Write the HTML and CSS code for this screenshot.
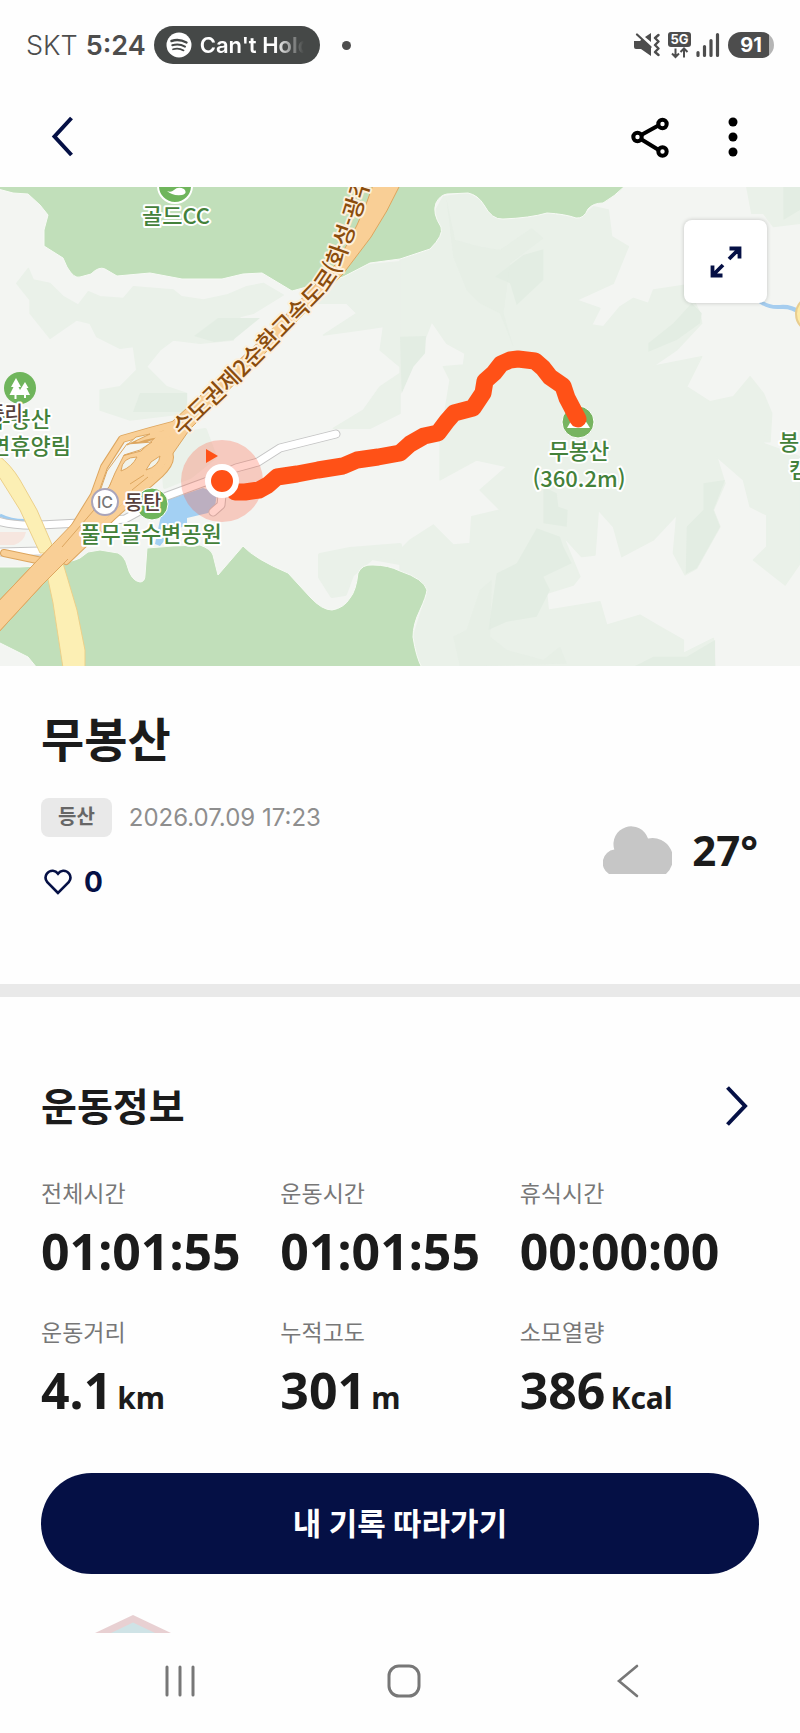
FILE: index.html
```html
<!DOCTYPE html>
<html lang="ko">
<head>
    <meta charset="UTF-8">
    <meta name="viewport" content="width=device-width, initial-scale=1.0">
    <title>무봉산</title>
    <link rel="stylesheet" href="styles.css">
</head>
<body>
    <!-- Status bar -->
    <div class="status-bar">
        <span class="carrier">SKT</span>
        <span class="clock">5:24</span>
        <div class="now-playing">
            <svg width="26" height="26" viewBox="0 0 26 26">
                <circle cx="13" cy="13" r="12.5" fill="#fff"/>
                <g fill="none" stroke="#454847" stroke-linecap="round">
                    <path d="M5.5 9 Q13 6.5 20.500 10.500" stroke-width="2.400"/>
                    <path d="M6.300 13.300 Q13 11.200 19 14.600" stroke-width="2"/>
                    <path d="M7 17.300 Q12.500 15.600 17.600 18.400" stroke-width="1.700"/>
                </g>
            </svg>
            <span class="song">Can't Hold</span>
        </div>
        <span class="notice-dot"></span>
        <div class="status-icons">
            <svg width="26" height="24" viewBox="0 0 26 24">
                <path d="M0 8 h6 l2 -2 L17 15 v8 L7 16 H2 Q0 16 0 14z M11 4 L17 0 v9z" fill="#4d4d4d"/>
                <path d="M3 1.500 L16.500 14" stroke="#4d4d4d" stroke-width="2.200" stroke-linecap="round"/>
                <path d="M24.500 2 l-3.500 3 l3.500 3.500 l-3.500 3.500 l3.500 3.500 l-3.500 3.500 l3.500 3" fill="none" stroke="#4d4d4d" stroke-width="2.400" stroke-linecap="round" stroke-linejoin="round"/>
            </svg>
            <svg width="24" height="28" viewBox="0 0 24 28">
                <rect x="0" y="1" width="23" height="15" rx="3" fill="#4d4d4d"/>
                <text x="11.500" y="13" class="net-text">5G</text>
                <path d="M7.500 17.500 v8 M4 22.500 l3.500 3.500 l3.500 -3.500 M16 26.500 v-8 M12.500 21 l3.500 -3.500 l3.500 3.500" fill="none" stroke="#4d4d4d" stroke-width="2"/>
            </svg>
            <svg width="24" height="26" viewBox="0 0 24 26">
                <path d="M2 20.500 v3 M8.500 14.500 v9 M15 8.500 v15 M21.500 2.500 v21" stroke="#4d4d4d" stroke-width="3.200" stroke-linecap="round"/>
            </svg>
            <span class="battery">91</span>
        </div>
    </div>

    <!-- App bar -->
    <header class="app-bar">
        <button class="icon-btn" aria-label="뒤로">
            <svg width="24" height="42" viewBox="0 0 24 42"><path d="M20.500 2 L3.500 20.500 L20.500 39" fill="none" stroke="#051045" stroke-width="4"/></svg>
        </button>
        <div class="app-actions">
            <button class="icon-btn" aria-label="공유">
                <svg width="40" height="42" viewBox="0 0 40 42">
                    <g fill="none" stroke="#000" stroke-width="4">
                        <path d="M7.500 21 L32 7.500 M7.500 21 L32 36"/>
                        <g fill="#fff"><circle cx="7.500" cy="21" r="4.200"/><circle cx="32.500" cy="8" r="4.200"/><circle cx="32.500" cy="35.500" r="4.200"/></g>
                    </g>
                </svg>
            </button>
            <button class="icon-btn" aria-label="더보기">
                <svg width="10" height="42" viewBox="0 0 10 42"><circle cx="5" cy="6" r="4.500"/><circle cx="5" cy="21" r="4.500"/><circle cx="5" cy="36" r="4.500"/></svg>
            </button>
        </div>
    </header>

    <!-- Route map -->
    <div class="map">
        <svg class="map-canvas" viewBox="0 0 800 479" preserveAspectRatio="xMidYMid slice">
            <rect width="800" height="479" fill="#f3f5f2"/>

            <!-- terrain shading -->
            <g fill="#eaf1e9" stroke="#eaf1e9" stroke-width="4" stroke-linejoin="round">
                <g transform="translate(0 -7) scale(.3334)">
                    <path d="M85 265 L100 300 L150 310 L190 350 L235 375 L265 335 L300 350 L370 355 L400 320 L520 330 L545 350 L610 360 L680 345 L740 320 L790 310 L850 345 L760 400 L720 410 L700 480 L600 490 L520 480 L480 510 L440 560 L460 580 L500 620 L560 640 L560 700 L390 720 L300 690 L300 630 L360 620 L410 570 L400 500 L360 505 L290 470 L270 430 L230 420 L150 475 L90 400 L90 360 L50 310z"/>
                    <path d="M1200 245 L1100 255 L1010 300 L950 370 L1040 370 L1070 400 L970 465 L1080 450 L1150 440 L1140 510 L1200 560z"/>
                    <path d="M1200 580 L1140 620 L1090 690 L1000 745 L1110 745 L1200 700z"/>
                </g>
                <g transform="translate(400 -7) scale(.3334)">
                    <path d="M0 237 L90 207 L123 155 L105 95 L130 50 L205 40 L245 65 L310 118 L440 100 L540 116 L580 80 L625 90 L635 170 L685 200 L640 310 L530 360 L600 385 L575 435 L610 440 L660 380 L700 355 L745 370 L760 330 L860 315 L900 400 L905 430 L830 510 L760 558 L905 530 L860 620 L930 665 L1000 650 L1050 590 L1090 640 L1115 700 L1110 785 L120 785 L150 600 L130 560 L190 555 L195 520 L140 490 L95 425 L70 490 L0 640z"/>
                    <path d="M1040 20 L1055 100 L1090 100 L1120 140 L1200 130 L1200 20z"/>
                </g>
                <g transform="translate(400 243) scale(.3334)">
                    <path d="M0 360 L30 330 L100 285 L160 345 L210 340 L215 260 L300 240 L240 180 L320 110 L230 90 L120 150 L120 0 L1100 0 L1090 40 L1200 80 L1200 400 L1155 465 L1060 390 L1100 350 L1100 255 L1050 230 L1030 150 L950 80 L975 160 L940 240 L960 290 L890 415 L855 435 L820 370 L830 255 L760 330 L665 380 L640 290 L595 240 L585 375 L545 380 L490 320 L540 440 L520 465 L440 490 L445 540 L600 515 L620 585 L720 555 L780 590 L850 630 L850 670 L940 625 L945 710 L60 710 L40 620 L82 485 L0 425z"/>
                </g>
                <path d="M180 247 L205 243 L215 270 L190 290 L165 300 L162 262z"/>
                <path d="M320 368 L350 362 L400 358 L400 376 L372 371 L352 388 L345 407 L332 409 L320 390z"/>
            </g>
            <g fill="#e3ede3">
                <path d="M218 131 L260 131 L233 153 L214 155 L194 149z"/>
                <path d="M140 206 L187 206 L187 225 L133 225z"/>
                <g transform="translate(400 -7) scale(.3334)">
                    <path d="M370 225 L430 208 L430 300 L350 375 L330 310 L285 290z"/>
                    <path d="M0 470 L78 468 L75 520 L40 560 L5 640z"/>
                    <path d="M875 370 L905 400 L900 430 L830 480 L745 515 L745 490 L820 430z"/>
                    <path d="M1150 20 L1200 20 L1200 90 L1150 120z"/>
                    <path d="M140 60 L165 180 L240 200 L300 210 L395 145 L430 175 L330 250 L310 400 L340 500 L300 400 L240 370 L200 330 L160 230z" opacity=".5"/>
                </g>
                <g transform="translate(400 243) scale(.3334)">
                    <path d="M410 295 L480 320 L490 350 L515 400 L430 440 L450 480 L410 560 L320 575 L265 600 L290 430 L350 400z"/>
                    <path d="M430 170 L470 190 L475 230 L503 240 L500 290 L430 280z"/>
                    <path d="M910 160 L975 150 L940 240 L960 290 L890 415 L857 432 L860 290 L910 240z"/>
                    <path d="M720 700 L760 680 L860 680 L945 630 L945 710 L700 710z"/>
                    <path d="M160 620 L200 600 L240 480 L275 450 L270 620 L320 660 L430 690 L480 650 L500 700 L180 710z" opacity=".5"/>
                </g>
            </g>

            <!-- forests -->
            <g fill="#c1dfba" stroke="#f7faf5" stroke-width="1">
                <path d="M-2 -2 V2 L13 6 L28 7 L40 18 L48 28 L44 43 L44 59 L63 71 L67 80 Q74 92 80 90 L91 87 Q99 79 105 82 L117 89 L150 86 L182 92 L222 92 L243 87 L262 86 L292 104 L343 90 L370 76 L400 72 L430 62 Q444 48 441 40 Q432 26 436 16 Q440 8 447 7 L468 6 Q478 8 484 18 Q492 33 503 32 Q530 31 547 26 Q565 27 576 31 Q584 32 588 22 Q593 16 603 16 Q614 10 626 -2z"/>
                <path d="M-2 380 L20 380 Q66 378 80 371 L88 365 L100 363 L118 366 Q125 370 127 378 Q131 394 140 395 Q145 395 145 388 L147 361 L173 359 L200 358 Q211 362 213 368 L218 388 L243 359 Q255 372 288 386 L310 410 Q322 423 332 423 Q344 421 350 411 Q356 404 358 386 Q362 377 373 378 Q388 378 400 384 Q424 392 427 403 Q426 410 420 423 Q413 437 413 450 Q416 470 422 481 H37 L28 470 L-2 455z"/>
            </g>

            <!-- water -->
            <path d="M0 328 Q14 335 32 333" fill="none" stroke="#9fccf0" stroke-width="3"/>
            <path d="M160 333 L167 313 L203 301 L217 306 L215 320 L208 326 L187 331 L187 338 L172 344 L160 359 L155 357z" fill="#a3d0f3"/>
            <path d="M758 113 Q768 121 780 120 Q792 119 800 126" fill="none" stroke="#a5cdef" stroke-width="4"/>
            <circle cx="814" cy="127" r="18" fill="#fdeaa6" stroke="#e8cd8f" stroke-width="2"/>

            <!-- minor roads -->
            <path d="M0 345 L26 345 Q24 355 14 358 L0 358z" fill="#f6e6df"/>
            <g fill="none" stroke-linejoin="round" stroke-linecap="round">
                <path d="M-5 333 Q12 339 40 338 L80 336 L125 332 L167 309 L205 295 L236 281 L258 275 L280 261 L336 247" stroke="#c4c4c4" stroke-width="9"/>
                <path d="M-5 333 Q12 339 40 338 L80 336 L125 332 L167 309 L205 295 L236 281 L258 275 L280 261 L336 247" stroke="#fff" stroke-width="7"/>
                <path d="M-5 365 L42 364 M222 308 L221 318 L213 325" stroke="#c4c4c4" stroke-width="9"/>
                <path d="M-5 365 L42 364 M222 308 L221 318 L213 325" stroke="#fff" stroke-width="7"/>
            </g>

            <!-- expressway and ramps -->
            <g fill="none" stroke="#dda65f" stroke-linejoin="round" stroke-linecap="round">
                <path d="M180 236 L150 244 L122 252 L104 280 L94 308 L62 360" stroke-width="8"/>
                <path d="M175 246 Q135 246 119 276 M160 258 Q180 268 160 287 L112 330 L66 374 M4 366 L42 374" stroke-width="8"/>
            </g>
            <path d="M373 -2 Q360 38 335 78 L262 152 L175 232 L141 264 L118 270 L110 298 L52 358 L-4 417 V448 L42 398 L110 328 L160 285 L190 242 L278 153 L343 87 L371 50 Q388 24 400 -2z" fill="#f9cf96" stroke="#dda65f"/>
            <path d="M107 284 L127 257 L152 255 L140 263 L124 268 L115 286 L109 300 L98 310z" fill="#f3f5f2" stroke="#dda65f"/>
            <g fill="none" stroke="#f9cf96" stroke-linejoin="round" stroke-linecap="round">
                <path d="M180 236 L150 244 L122 252 L104 280 L94 308 L62 360" stroke-width="6"/>
                <path d="M168 247 Q150 247 138 252 M160 258 Q180 268 160 287 L112 330 L66 374 M4 366 L42 374" stroke-width="6"/>
            </g>
            <g fill="#f1f3ea" stroke="#dda65f">
                <path d="M121 284 Q122 270 137 270 Q132 280 121 284z"/>
                <path d="M146 283 L151 275 L160 269 Q159 279 146 283z"/>
                <path d="M136 250 L150 247 L127 258z"/>
            </g>
            <path d="M62 360 L94 323 M130 297 L144 288 M132 303 L148 290" fill="none" stroke="#dda65f"/>
            <path d="M-2 268 Q11 278 20 293 L37 323 L53 360 L63 376 L77 423 L85 463 V481 H63 L53 416 L47 388 L53 372 L50 366 L40 366 L20 323 L-2 288z" fill="#fcefb4" stroke="#ecd08a"/>
            <path d="M-4 417 L52 358 L68 372 L42 398 L-4 448z" fill="#f9cf96"/>
            <path d="M-4 417 L52 358 M68 372 L42 398 L-4 448" fill="none" stroke="#dda65f"/>

            <!-- places -->
            <g stroke="#fff">
                <circle cx="175" cy="-1" r="17" fill="#6fb55c" stroke-width="2"/>
                <circle cx="20" cy="201" r="16" fill="#6fb55c" stroke="none"/>
                <circle cx="152" cy="317" r="16" fill="#6fb55c" stroke-width="1"/>
                <circle cx="578" cy="235" r="16" fill="#77b460" stroke-width="1"/>
            </g>
            <g fill="#fff">
                <path d="M167 4 Q171 6 174 3 Q178 -1 184 2 Q188 6 182 8 Q172 9 167 4z"/>
                <path d="M16 191 l5 9 h-2.500 l4 8 h-6 v4 h-2 v-4 h-5 l4 -8 H11z M25 195 l3.500 6 h-2 l3.500 7 h-4 v3 h-2 v-3 h-2 l-2 -5z"/>
                <path d="M567 241 L578 222 L590 241z"/>
            </g>
            <circle cx="105" cy="315" r="13" fill="#fff" stroke="#aaa5bb" stroke-width="2"/>
            <text x="105" y="321" class="ic-text">IC</text>

            <g class="place-label">
                <text x="176" y="37" text-anchor="middle">골드CC</text>
                <text x="51" y="240" text-anchor="end">무봉산</text>
                <text x="71" y="267" text-anchor="end">연휴양림</text>
                <text x="151" y="355" text-anchor="middle">풀무골수변공원</text>
                <text x="579" y="272" text-anchor="middle">무봉산</text>
                <text x="579" y="300" text-anchor="middle">(360.2m)</text>
                <text x="779" y="263">봉</text>
                <text x="789" y="291">캠</text>
            </g>
            <g class="place-label town">
                <text x="23" y="234" text-anchor="end">중리</text>
                <text x="143" y="323" text-anchor="middle">동탄</text>
            </g>
            <path id="roadLine" d="M182 250 L245 189 L326 106 Q338 92 344 74 L361 26 L378 -30" fill="none"/>
            <text class="road-label"><textPath href="#roadLine">수도권제2순환고속도로(화성-광주</textPath></text>

            <!-- recorded track -->
            <circle cx="222" cy="294" r="41" fill="#ff5a3c" opacity=".28"/>
            <path d="M235 305 L245 305 L259 303 L268 298 L277 290 L297 287 L318 283 L343 279 L357 273 L378 270 L400 266 L410 257 L424 249 L438 246 L447 234 L454 226 L473 221 L483 206 L485 194 L494 186 L501 177 L510 173 L518 172 L535 174 L543 181 L550 190 L563 199 L567 211 L578 232" fill="none" stroke="#ff5117" stroke-width="17" stroke-linejoin="round" stroke-linecap="round"/>
            <path d="M206 262 L218 269 L206 276z" fill="#ff5117"/>
            <circle cx="222" cy="294" r="14" fill="#ff5117" stroke="#fff" stroke-width="6"/>
        </svg>
        <button class="expand-btn" aria-label="지도 확대">
            <svg width="32" height="32" viewBox="0 0 32 32">
                <path d="M19.500 2.500 H29.500 V12.500 M29 3 L19 13 M2.500 19.500 V29.500 H12.500 M3 29 L13 19" fill="none" stroke="#051045" stroke-width="3.800"/>
            </svg>
        </button>
    </div>

    <!-- Summary -->
    <section class="summary">
        <h1>무봉산</h1>
        <div class="summary-row">
            <div>
                <div class="meta">
                    <span class="tag">등산</span>
                    <time datetime="2026-07-09T17:23">2026.07.09 17:23</time>
                </div>
                <button class="like" aria-label="좋아요 0">
                    <svg width="28" height="26" viewBox="0 0 28 26"><path d="M14 24 L3.300 13.200 Q0 9 2.800 4.800 Q5.200 1.600 9 1.800 Q12 2 14 4.600 Q16 2 19 1.800 Q22.800 1.600 25.200 4.800 Q28 9 24.700 13.200z" fill="none" stroke="#051045" stroke-width="2.600"/></svg>
                    0
                </button>
            </div>
            <div class="weather">
                <svg width="69" height="48" viewBox="0 0 69 48"><path d="M6 48 A13.300 13.300 0 0 1 11.300 23.500 A17.300 17.300 0 0 1 45 12.600 A20.500 20.500 0 0 1 63 48z" fill="#c6c6c6"/></svg>
                <span>27°</span>
            </div>
        </div>
    </section>

    <!-- Workout info -->
    <section class="workout">
        <div class="section-head">
            <h2>운동정보</h2>
            <a href="#" aria-label="운동정보 상세">
                <svg width="24" height="42" viewBox="0 0 24 42"><path d="M2.500 1.500 L20 20 L2.500 38.500" fill="none" stroke="#051045" stroke-width="4"/></svg>
            </a>
        </div>
        <dl class="stats">
            <div><dt>전체시간</dt><dd>01:01:55</dd></div>
            <div><dt>운동시간</dt><dd>01:01:55</dd></div>
            <div><dt>휴식시간</dt><dd>00:00:00</dd></div>
            <div><dt>운동거리</dt><dd>4.1<small>km</small></dd></div>
            <div><dt>누적고도</dt><dd>301<small>m</small></dd></div>
            <div><dt>소모열량</dt><dd>386<small>Kcal</small></dd></div>
        </dl>
        <button class="follow-btn">내 기록 따라가기</button>
    </section>

    <div class="banner">
        <svg width="76" height="19" viewBox="0 0 76 19">
            <path d="M0 19 L38 1 L76 19z" fill="#e8d0d2"/>
            <path d="M16 19 L38 8.500 L60 19z" fill="#cfe3e6"/>
        </svg>
    </div>

    <!-- System navigation -->
    <nav class="nav-bar">
        <button class="icon-btn" aria-label="최근 앱">
            <svg width="34" height="34" viewBox="0 0 34 34"><path d="M4 3 V31 M17 3 V31 M30 3 V31" stroke="#777" stroke-width="3" stroke-linecap="round"/></svg>
        </button>
        <button class="icon-btn" aria-label="홈">
            <svg width="34" height="34" viewBox="0 0 34 34"><rect x="2" y="2" width="30" height="30" rx="10" fill="none" stroke="#777" stroke-width="3"/></svg>
        </button>
        <button class="icon-btn" aria-label="뒤로 가기">
            <svg width="34" height="34" viewBox="0 0 34 34"><path d="M26 2 L8 17 L26 32" fill="none" stroke="#777" stroke-width="2.600" stroke-linecap="round"/></svg>
        </button>
    </nav>
</body>
</html>
```
FILE: styles.css
```css
* { margin: 0; padding: 0; box-sizing: border-box; }
body {
    font-family: Inter, "Noto Sans CJK KR", sans-serif;
    background-color: #fefefe;
    color: #1b1b1b;
}
svg { display: block; flex-shrink: 0; }
button { background: none; border: none; font-family: inherit; color: inherit; cursor: pointer; }

/* status bar */
.status-bar {
    display: flex;
    align-items: center;
    height: 86px;
    padding: 4px 26px 0;
    color: #4d4d4d;
    font-size: 27px;
}
.carrier { font-weight: 300; }
.clock { margin-left: 8px; font-weight: 600; }
.now-playing {
    display: flex;
    align-items: center;
    gap: 8px;
    width: 166px;
    height: 38px;
    margin-left: 8px;
    padding: 0 16px 0 12px;
    border-radius: 19px;
    background-color: #454847;
}
.song {
    overflow: hidden;
    white-space: nowrap;
    color: #fff;
    font-size: 22px;
    font-weight: 600;
    -webkit-mask-image: linear-gradient(to right, #000 72%, transparent);
    mask-image: linear-gradient(to right, #000 72%, transparent);
}
.notice-dot { width: 9px; height: 9px; margin-left: 22px; border-radius: 50%; background-color: #4d4d4d; }
.status-icons { display: flex; align-items: center; gap: 8px; margin-left: auto; }
.status-icons svg:nth-child(2) { margin-right: -4px; }
.net-text { font-size: 13px; font-weight: 700; fill: #fff; text-anchor: middle; }
.battery {
    width: 46px;
    height: 26px;
    border-radius: 13px;
    background: linear-gradient(to right, #4d4d4d 41px, #b5b5b5 41px);
    color: #fff;
    font-size: 20px;
    font-weight: 700;
    line-height: 26px;
    text-align: center;
}

/* app bar */
.app-bar {
    display: flex;
    align-items: center;
    justify-content: space-between;
    height: 101px;
    padding: 0 62px 0 51px;
}
.app-actions { display: flex; gap: 58px; }

/* map */
.map { position: relative; aspect-ratio: 800 / 479; overflow: hidden; }
.map-canvas { width: 100%; height: 100%; }
.place-label, .road-label {
    font-family: "Noto Sans CJK KR", sans-serif;
    font-size: 22px;
    font-weight: 500;
    fill: #43813a;
    stroke: #fff;
    stroke-width: 4px;
    stroke-linejoin: round;
    paint-order: stroke;
}
.town { font-size: 20px; fill: #57403c; }
.road-label { font-size: 23px; fill: #8a4c0c; stroke: #fdf0dc; }
.ic-text { font-size: 16px; font-weight: 500; fill: #777; text-anchor: middle; }
.expand-btn {
    position: absolute;
    top: 33px;
    right: 33px;
    display: grid;
    place-items: center;
    width: 83px;
    height: 83px;
    border-radius: 8px;
    background-color: #fff;
    box-shadow: 0 0 4px rgba(0, 0, 0, 0.2);
}

/* summary */
.summary { padding: 46px 41px 87px; border-bottom: 13px solid #e9e9e9; }
.summary h1 { font-size: 47px; line-height: 56px; }
.summary-row { display: flex; justify-content: space-between; align-items: center; margin-top: 30px; }
.meta { display: flex; align-items: center; gap: 17px; }
.meta time { color: #8e8e8e; font-size: 24px; }
.tag {
    padding: 0 17px;
    border-radius: 8px;
    background-color: #e9e9e9;
    color: #666;
    font-size: 20px;
    font-weight: 700;
    line-height: 39px;
}
.like {
    display: flex;
    align-items: center;
    gap: 12px;
    margin-top: 30px;
    padding-left: 3px;
    color: #051045;
    font-size: 28px;
    font-weight: 700;
    line-height: 30px;
}
.weather { display: flex; align-items: center; gap: 20px; padding: 4px 1px 0 0; font-family: "Noto Sans", sans-serif; font-size: 42px; font-weight: 700; line-height: 46px; }

/* workout */
.workout { padding: 83px 41px 0; }
.section-head { display: flex; justify-content: space-between; align-items: center; padding-right: 10px; }
.section-head h2 { font-size: 39px; line-height: 54px; }
.stats { display: grid; grid-template-columns: repeat(3, 1fr); row-gap: 38px; margin-top: 44px; }
.stats dt { color: #777; font-size: 23px; line-height: 32px; }
.stats dd { margin-top: 13px; font-family: "Noto Sans", sans-serif; font-size: 50px; font-weight: 700; line-height: 56px; white-space: nowrap; }
.stats small { margin-left: 5px; font-size: 30px; line-height: 30px; }
.follow-btn {
    width: 100%;
    margin-top: 55px;
    padding: 28px;
    border-radius: 51px;
    background-color: #051045;
    color: #fff;
    font-size: 31px;
    font-weight: 700;
    line-height: 45px;
}

.banner { padding: 40px 95px 0; }

/* system navigation */
.nav-bar { display: grid; grid-template-columns: repeat(3, 1fr); justify-items: center; align-items: center; height: 95px; padding: 0 60px 0 68px; }
```
